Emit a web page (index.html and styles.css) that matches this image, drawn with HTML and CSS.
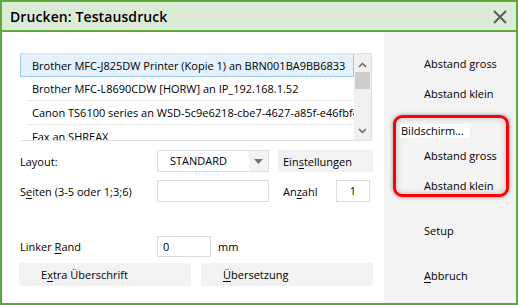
FILE: index.html
```html
<!DOCTYPE html>
<html lang="de">

<head>
    <meta charset="UTF-8">
    <title>Drucken: Testausdruck</title>
    <link rel="stylesheet" href="styles.css">
</head>

<body>
    <div class="window">
        <header class="titlebar">
            <h1>Drucken: Testausdruck</h1>
            <svg class="close" width="14" height="14" viewBox="0 0 14 14">
                <path d="M1 1 L13 13 M13 1 L1 13" stroke="#5a5a5a" stroke-width="2" fill="none"/>
            </svg>
        </header>
        <div class="content">
            <main class="main">
                <div class="printer-list">
                    <ul class="items">
                        <li class="selected">Brother MFC-J825DW Printer (Kopie 1) an BRN001BA9BB6833</li>
                        <li>Brother MFC-L8690CDW [HORW] an IP_192.168.1.52</li>
                        <li>Canon TS6100 series an WSD-5c9e6218-cbe7-4627-a85f-e46fbf4</li>
                        <li>Fax an SHREAX</li>
                    </ul>
                    <div class="scrollbar">
                        <svg class="arrow" width="9" height="6" viewBox="0 0 9 6"><path d="M1 5 L4.5 1.5 L8 5" stroke="#606060" stroke-width="1.4" fill="none"/></svg>
                        <div class="thumb"></div>
                        <svg class="arrow down" width="9" height="6" viewBox="0 0 9 6"><path d="M1 1 L4.5 4.5 L8 1" stroke="#606060" stroke-width="1.4" fill="none"/></svg>
                    </div>
                </div>

                <div class="row row-layout">
                    <span class="label">Layout:</span>
                    <div class="select">
                        <span class="select-text">STANDARD</span>
                        <span class="select-btn"><svg width="9" height="5" viewBox="0 0 9 5"><path d="M0 0 L9 0 L4.5 5 Z" fill="#707070"/></svg></span>
                    </div>
                    <button class="btn btn-settings">Ein<u>s</u>tellungen</button>
                </div>

                <div class="row row-pages">
                    <span class="label">S<u>e</u>iten (3-5 oder 1;3;6)</span>
                    <div class="input input-wide"></div>
                    <span class="label-count">An<u>z</u>ahl</span>
                    <div class="input input-count">1</div>
                </div>

                <div class="row row-margin">
                    <span class="label">Linker <u>R</u>and</span>
                    <div class="input input-small">0</div>
                    <span class="unit">mm</span>
                </div>

                <div class="row row-buttons">
                    <button class="btn btn-wide">E<u>x</u>tra Überschrift</button>
                    <button class="btn btn-wide"><u>Ü</u>bersetzung</button>
                </div>
            </main>

            <aside class="side">
                <div class="side-item first">Abstand gross</div>
                <div class="side-item">Abstand klein</div>
                <div class="group">
                    <div class="group-label">Bildschirm...</div>
                    <div class="side-item g1">Abstand gross</div>
                    <div class="side-item g2">Abstand klein</div>
                </div>
                <div class="side-item setup">Setup</div>
                <div class="side-item cancel"><u>A</u>bbruch</div>
            </aside>
        </div>
    </div>
</body>

</html>
```

FILE: styles.css
```css
body {
    margin: 0;
    padding: 0;
    font-family: "Open Sans", "Noto Sans", Arial, sans-serif;
    font-size: 11px;
    color: #000;
    background: #fff;
}

u {
    text-decoration-thickness: 1px;
    text-underline-offset: 2px;
}

.window {
    width: 518px;
    height: 305px;
    box-sizing: border-box;
    border: 2px solid #5da83a;
    display: flex;
    flex-direction: column;
    overflow: hidden;
}

.titlebar {
    height: 28px;
    background-color: #dcebd5;
    border-bottom: 2px solid #5da83a;
    display: flex;
    align-items: center;
    justify-content: space-between;
    padding: 0 9px 0 8px;
}

.titlebar h1 {
    margin: 0;
    font-size: 14px;
    font-weight: 600;
    letter-spacing: 0.1px;
}

.close {
    margin-top: 1px;
}

.content {
    flex: 1;
    display: flex;
}

.main {
    flex: 1;
    padding: 21px 0 0 18px;
}

.side {
    width: 132px;
    background-color: #f3f3f3;
    display: flex;
    flex-direction: column;
}

/* printer list */
.printer-list {
    width: 352px;
    height: 88px;
    box-sizing: border-box;
    border: 1px solid #e2e2e2;
    border-left: none;
    display: flex;
    overflow: hidden;
}

.items {
    list-style: none;
    margin: 0;
    padding: 0;
    flex: 1;
    overflow: hidden;
}

.items li {
    height: 24px;
    line-height: 23px;
    white-space: nowrap;
    overflow: hidden;
    box-sizing: border-box;
    margin-left: 6px;
    padding-left: 6px;
    border-bottom: 1px solid #ececec;
}

.items li.selected {
    margin-left: 0;
    padding-left: 11px;
    margin-top: -1px;
    background-color: #e5f1fb;
    border: 1px solid #99c9f2;
}

.scrollbar {
    width: 17px;
    background-color: #f0f0f0;
    display: flex;
    flex-direction: column;
    align-items: center;
}

.scrollbar .arrow {
    margin-top: 8px;
}

.scrollbar .thumb {
    width: 15px;
    height: 17px;
    margin-top: 4px;
    background-color: #cdcdcd;
}

.scrollbar .arrow.down {
    margin-top: auto;
    margin-bottom: 6px;
}

/* form rows */
.row {
    display: flex;
    align-items: center;
}

.label {
    width: 137px;
}

.row-layout {
    margin-top: 9px;
    height: 22px;
}

.row-pages {
    margin-top: 8px;
    height: 22px;
}

.row-margin {
    margin-top: 34px;
    height: 21px;
}

.row-buttons {
    margin-top: 6px;
    margin-left: -1px;
    gap: 10px;
}

.select {
    width: 112px;
    height: 22px;
    box-sizing: border-box;
    border: 1px solid #e0e0e0;
    display: flex;
}

.select-text {
    flex: 1;
    background: #fff;
    padding-left: 12px;
    line-height: 19px;
}

.select-btn {
    width: 19px;
    background-color: #f3f3f3;
    display: flex;
    align-items: center;
    justify-content: center;
}

.btn {
    font-family: inherit;
    font-size: 11px;
    color: #000;
    background-color: #f2f2f2;
    border: none;
    padding: 0;
    text-align: left;
    cursor: pointer;
}

.btn-settings {
    width: 95px;
    height: 22px;
    margin-left: 9px;
    padding-left: 5px;
}

.input {
    height: 22px;
    box-sizing: border-box;
    border: 1px solid #dcdcdc;
    background: #fff;
    line-height: 19px;
}

.input-wide {
    width: 112px;
}

.label-count {
    margin-left: 14px;
    width: 53px;
}

.input-count {
    width: 34px;
    text-align: center;
}

.input-small {
    width: 54px;
    height: 21px;
    padding-left: 5px;
}

.unit {
    margin-left: 7px;
}

.btn-wide {
    width: 172px;
    height: 23px;
    padding-left: 22px;
}

/* right side */
.side-item {
    padding-left: 40px;
    height: 30px;
    line-height: 30px;
}

.side-item.first {
    margin-top: 17px;
}

.group {
    margin: 6px 7px 0 9px;
    height: 82px;
    box-sizing: border-box;
    border: 3px solid #f00;
    border-radius: 9px;
    box-shadow: 0 0 4px rgba(0, 0, 0, 0.4), inset 0 0 6px rgba(0, 0, 0, 0.22);
}

.group-label {
    display: inline-block;
    margin: 6px 0 0 4px;
    height: 14px;
    line-height: 14px;
    padding: 0 6px 0 1px;
    background-color: #fff;
}

.group .side-item {
    padding-left: 28px;
    height: 16px;
    line-height: 16px;
}

.group .g1 {
    margin-top: 10px;
}

.group .g2 {
    margin-top: 14px;
}

.side-item.setup {
    margin-top: 26px;
    height: 16px;
    line-height: 16px;
}

.side-item.cancel {
    margin-top: 29px;
    height: 16px;
    line-height: 16px;
}
```
